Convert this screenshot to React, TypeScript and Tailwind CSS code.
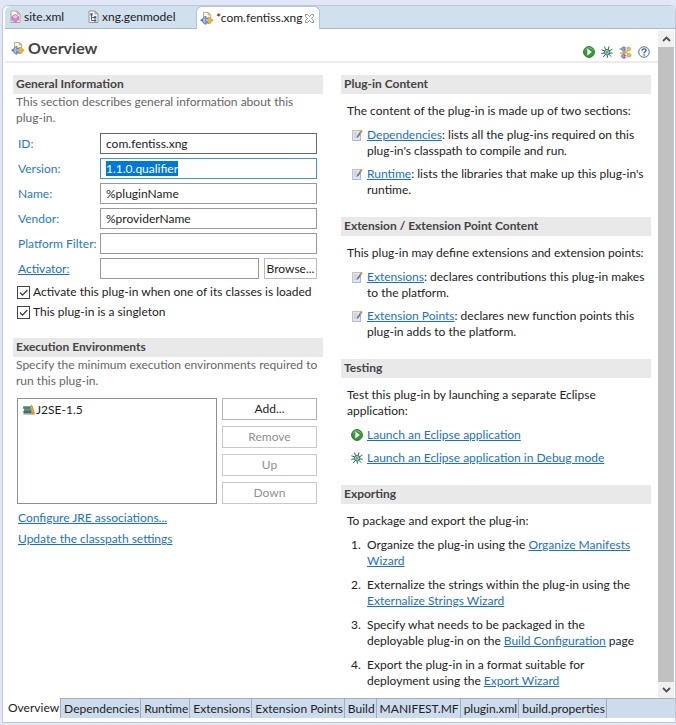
import { useEffect, useRef } from "react";
import type { ReactNode } from "react";

function PluginIcon() {
  return (
    <svg width="14" height="15" viewBox="0 0 14 15" className="shrink-0" aria-hidden="true">
      <path d="M3.500 1.500h4.800l2.400 2.400v8.100h-7.200z" fill="#fdf8ea" stroke="#c4af78" strokeWidth="1" />
      <path d="M8.200 1.500v2.500h2.500z" fill="#e8d7a4" stroke="#b9a268" strokeWidth=".7" />
      <path d="M7.800 6.400h1.600c1.400.4 2 1.200 2 2.900s-.6 2.700-2 3.100H7.800z" fill="#f0bd3a" stroke="#b98a25" strokeWidth=".7" />
      <path d="M11.400 8.400h1.800v1.800h-1.800z" fill="#e0a01c" />
      <path d="M6 5.500C3.800 5.700 2.500 7 2.500 9.200s1.300 3.800 3.500 4z" fill="#9fc0ee" stroke="#4670b4" strokeWidth=".9" />
      <path d="M.6 8.300h2v1.900h-2z" fill="#4670b4" />
      <path d="M6.200 6.900h1.600v1.200H6.200zM6.200 10.500h1.600v1.200H6.200z" fill="#4670b4" />
    </svg>
  );
}

function SiteIcon() {
  return (
    <svg width="11" height="14" viewBox="0 0 11 14" className="shrink-0" aria-hidden="true">
      <path d="M1 1h6l3 3v8.500H1z" fill="#fdf8f4" stroke="#b5a684" />
      <path d="M7 1v3h3z" fill="#e4d6b0" stroke="#a99a7c" strokeWidth=".7" />
      <path d="M5.200 4.500l3.300 2v3.600l-3.300 2-3.300-2V6.500z" fill="#d98bd5" stroke="#b05cb0" strokeWidth=".7" />
      <path d="M5.200 4.900l2.600 1.700-2.600 1.600-2.600-1.600z" fill="#f2c4ee" />
    </svg>
  );
}

function GenmodelIcon() {
  return (
    <svg width="11" height="14" viewBox="0 0 11 14" className="shrink-0" aria-hidden="true">
      <path d="M1 1h6l3 3v8.500H1z" fill="#f4f7fd" stroke="#a0977c" />
      <path d="M7 1v3h3z" fill="#e0d3ac" stroke="#8b8a80" strokeWidth=".7" />
      <path d="M3.500 5v5.500H6M3.500 7.500H6" fill="none" stroke="#3a56a0" strokeWidth=".9" />
      <path d="M2.400 3.200h2.200v2.200H2.400zM6 6.300h2.300v2.200H6zM6 9.400h2.300v2.200H6z" fill="#34539c" />
    </svg>
  );
}

function RunIcon() {
  return (
    <svg width="12" height="12" viewBox="0 0 12 12" className="shrink-0" aria-hidden="true">
      <circle cx="6" cy="6" r="5.400" fill="#36993b" stroke="#24752b" />
      <path d="M2 4.500a4.300 4.300 0 0 1 8 0" fill="none" stroke="#7cc57b" strokeWidth="1" />
      <path d="M4.300 2.600L8.800 6 4.300 9.400z" fill="#fff" />
    </svg>
  );
}

function BugIcon() {
  return (
    <svg width="12" height="12" viewBox="0 0 12 12" className="shrink-0" aria-hidden="true">
      <path
        d="M3.500 .6l1 3M8 .4l-.8 3M.4 3.800l3 1M11.400 3.200l-2.800 1.500M.3 7.500l3-.6M11.700 7.200L8.800 7M2.200 11l1.900-2.300M6.300 11.800V9.300M10.200 10.600L8.200 8.500"
        stroke="#2f6460"
        strokeWidth="1"
        fill="none"
      />
      <ellipse cx="6.100" cy="6.200" rx="2.800" ry="2.900" fill="#a5cfae" stroke="#2f6b60" strokeWidth=".9" />
      <path d="M4.300 4.300l3.700 3.800M7.800 4.200L4.500 8" stroke="#417f70" strokeWidth=".6" />
    </svg>
  );
}

function ExportPluginIcon() {
  return (
    <svg width="13" height="13" viewBox="0 0 13 13" className="shrink-0" aria-hidden="true">
      <path d="M5.500 .8v4.400c-2.200 0-3-1-3-2.200s.8-2.200 3-2.200z" fill="#86a9e2" stroke="#5379bd" strokeWidth=".7" />
      <path d="M.3 3h2.200M5.500 2h2M5.500 4h2" stroke="#5379bd" />
      <path d="M8.500 1.200h1.600c1.200 0 1.600.8 1.600 1.800s-.4 1.800-1.600 1.800H8.500z" fill="#f2c244" stroke="#c18c1d" strokeWidth=".6" />
      <path d="M1 7.200h6.500M3.500 5.900h5" stroke="#e1a22c" strokeWidth="1.300" />
      <path d="M5.500 8v4.400c-2.200 0-3-1-3-2.200s.8-2.200 3-2.200z" fill="#b78bd6" stroke="#845ab0" strokeWidth=".7" />
      <path d="M5.500 9.300h2M5.500 11.200h2" stroke="#845ab0" />
      <path d="M8.500 7.600h1.800c1.200 0 1.700.7 1.700 1.600s-.5 1.700-1.700 1.700H8.500z" fill="#f2c244" stroke="#c18c1d" strokeWidth=".6" />
    </svg>
  );
}

function HelpIcon() {
  return (
    <svg width="12" height="12" viewBox="0 0 12 12" className="shrink-0" aria-hidden="true">
      <circle cx="6" cy="6" r="5.300" fill="#f4f7fb" stroke="#5a7394" strokeWidth="1" />
      <path d="M4 4.700c0-1.200.8-1.900 2-1.900s2 .7 2 1.700c0 1.300-1.900 1.300-1.900 2.700" fill="none" stroke="#40608a" strokeWidth="1.300" />
      <circle cx="6.100" cy="8.900" r=".8" fill="#40608a" />
    </svg>
  );
}

function EditIcon() {
  return (
    <svg width="12" height="13" viewBox="0 0 12 13" className="shrink-0" aria-hidden="true">
      <path d="M1.500 1.500h8v10h-8z" fill="#dde6f5" stroke="#c9c3a4" />
      <path d="M1.500 11.500h8V6" fill="none" stroke="#aab9d3" />
      <path d="M3 4h3M3 6h2.500M3 8h2.500" stroke="#b0c4e6" />
      <path d="M5.500 9l.5-2L8.600 3.400l1.400 1L7.400 8z" fill="#6b7484" />
      <path d="M8.300 3.600L10 .8l1.700 1.200-1.900 2.700z" fill="#cf8a48" />
    </svg>
  );
}

function LibraryIcon() {
  return (
    <svg width="12" height="12" viewBox="0 0 12 12" className="shrink-0" aria-hidden="true">
      <path d="M.5 2.700h6.500v1.900H.5z" fill="#3e8f8c" stroke="#28635f" strokeWidth=".6" />
      <path d="M1.500 4.900h6v1.800H1.500z" fill="#52b56d" stroke="#2f7a50" strokeWidth=".6" />
      <path d="M.8 7h7.400v2H.8z" fill="#3a78b8" stroke="#265684" strokeWidth=".6" />
      <path d="M7.300 2.300L8.900 1.300l2.500 7.700-2.400.5z" fill="#f0a63a" stroke="#b9711b" strokeWidth=".6" />
      <path d="M.3 9.300h11.400v1.200H.3z" fill="#c47b2b" />
    </svg>
  );
}

function CloseIcon() {
  return (
    <svg width="9" height="9" viewBox="0 0 9 9" aria-hidden="true">
      <path
        d="M.5 .5h2l2 2 2-2h2v2l-2 2 2 2v2h-2l-2-2-2 2h-2v-2l2-2-2-2z"
        fill="#fff"
        stroke="#777"
        strokeWidth=".8"
      />
    </svg>
  );
}

function Chevron({ down = false }: { down?: boolean }) {
  return (
    <svg width="9" height="6" viewBox="0 0 9 6" aria-hidden="true">
      <path d={down ? "M1 1l3.500 3.500L8 1" : "M1 5l3.500-3.500L8 5"} fill="none" stroke="#505050" strokeWidth="1.800" />
    </svg>
  );
}

function Link({ children }: { children: ReactNode }) {
  return (
    <a href="#" className="text-[#1a70cf] underline">
      {children}
    </a>
  );
}

function SectionTitle({ children }: { children: ReactNode }) {
  return <h2 className="h-[19px] bg-[#e9e9e9] pl-[3px] text-xs/[18px] font-bold text-[#444]">{children}</h2>;
}

const inputClass =
  "h-[21px] w-full min-w-0 border bg-white px-[5px] outline-none selection:bg-[#0078d7] selection:text-white";

function Field({ id, label, value, selected = false, dark = false }: {
  id: string;
  label: string;
  value: string;
  selected?: boolean;
  dark?: boolean;
}) {
  const ref = useRef<HTMLInputElement>(null);
  useEffect(() => {
    if (selected) {
      ref.current?.focus();
      ref.current?.select();
    }
  }, [selected]);
  return (
    <>
      <label htmlFor={id} className="whitespace-nowrap text-[#1f78cf]">{label}</label>
      <input
        ref={ref}
        id={id}
        defaultValue={value}
        className={`${inputClass} ${selected ? "border-[#3c94e0]" : dark ? "border-[#666]" : "border-[#999]"}`}
      />
    </>
  );
}

function Check({ children }: { children: ReactNode }) {
  return (
    <label className="flex h-5 items-center gap-[3px] whitespace-nowrap">
      <span className="grid size-[13px] shrink-0">
        <input
          type="checkbox"
          defaultChecked
          className="peer col-start-1 row-start-1 size-[13px] appearance-none border border-[#444] bg-white"
        />
        <svg viewBox="0 0 13 13" className="pointer-events-none col-start-1 row-start-1 hidden size-[13px] peer-checked:block" aria-hidden="true">
          <path d="M3 6.500l2.500 2.600L10.300 4" fill="none" stroke="#333" strokeWidth="1.200" />
        </svg>
      </span>
      {children}
    </label>
  );
}

function Item({ icon, children }: { icon: ReactNode; children: ReactNode }) {
  return (
    <li className="flex">
      <span className="flex h-4 w-5 shrink-0 items-center pl-1">{icon}</span>
      <span className="whitespace-nowrap">{children}</span>
    </li>
  );
}

function InfoSection({ title, intro, children }: { title: string; intro: ReactNode; children: ReactNode }) {
  return (
    <section>
      <SectionTitle>{title}</SectionTitle>
      <p className="mt-[9px] mb-2 pl-[6px] whitespace-nowrap">{intro}</p>
      {children}
    </section>
  );
}

const pages = [
  "Overview",
  "Dependencies",
  "Runtime",
  "Extensions",
  "Extension Points",
  "Build",
  "MANIFEST.MF",
  "plugin.xml",
  "build.properties",
];

export default function App() {
  return (
    <div className="flex min-h-screen flex-col bg-[#e1e7f6] pt-[5px] pb-[2px] pl-[2px] font-['Lato','Open_Sans',sans-serif] text-xs/4 text-[#222]">
      <div className="flex flex-1 flex-col rounded-t-md border border-[#bfc6d6] bg-white pb-1 pl-[2px]">
        <div role="tablist" aria-label="Editors" className="flex h-[23px] items-stretch rounded-t-md border-b border-[#a8b9d8] bg-[#d0e0ef]">
          <button role="tab" className="flex w-[79px] items-center gap-[3px] pl-[5px]">
            <SiteIcon />
            site.xml
          </button>
          <button role="tab" className="flex w-[112px] items-center gap-[3px] pl-1">
            <GenmodelIcon />
            xng.genmodel
          </button>
          <div className="-mb-px flex items-center gap-[3px] rounded-t-md border-x border-t border-[#b5c3db] bg-white pr-[5px] pl-[3px]">
            <button role="tab" aria-selected="true" className="flex items-center gap-[2px] whitespace-nowrap">
              <PluginIcon />
              *com.fentiss.xng
            </button>
            <button aria-label="Close editor">
              <CloseIcon />
            </button>
          </div>
        </div>

        <div className="flex flex-1">
          <main className="min-w-0 flex-1">
            <header className="flex h-[34px] items-center justify-between border-b-2 border-[#ececec] pr-2 pl-[6px]">
              <h1 className="flex items-center gap-[3px] pt-[6px] text-base/5 font-bold text-[#444]">
                <PluginIcon />
                Overview
              </h1>
              <div className="flex items-center gap-[6px] pt-[14px]">
                <button aria-label="Launch"><RunIcon /></button>
                <button aria-label="Debug"><BugIcon /></button>
                <button aria-label="Export"><ExportPluginIcon /></button>
                <button aria-label="Help"><HelpIcon /></button>
              </div>
            </header>

            <div className="grid grid-cols-2 gap-[18px] pt-3 pr-[7px] pl-2">
              <div>
                <SectionTitle>General Information</SectionTitle>
                <p className="h-[39px] pl-[3px] whitespace-nowrap text-[#666]">
                  This section describes general information about this
                  <br />
                  plug-in.
                </p>
                <div className="grid grid-cols-[82px_1fr] items-center gap-y-1 pr-[6px] pl-[5px]">
                  <Field id="id" label="ID:" value="com.fentiss.xng" dark />
                  <Field id="version" label="Version:" value="1.1.0.qualifier" selected />
                  <Field id="name" label="Name:" value="%pluginName" />
                  <Field id="vendor" label="Vendor:" value="%providerName" />
                  <Field id="filter" label="Platform Filter:" value="" />
                  <Link>Activator:</Link>
                  <div className="flex gap-[5px]">
                    <input aria-label="Activator" className={`${inputClass} flex-1 border-[#999]`} />
                    <button className="w-[53px] border border-[#bbb]">Browse...</button>
                  </div>
                </div>
                <div className="mt-[3px] mb-4 pl-1">
                  <Check>Activate this plug-in when one of its classes is loaded</Check>
                  <Check>This plug-in is a singleton</Check>
                </div>

                <SectionTitle>Execution Environments</SectionTitle>
                <p className="h-[41px] pl-[3px] whitespace-nowrap text-[#666]">
                  Specify the minimum execution environments required to
                  <br />
                  run this plug-in.
                </p>
                <div className="flex gap-[5px] pr-[6px] pl-1">
                  <ul role="listbox" aria-label="Execution environments" className="min-w-0 flex-1 border border-[#8c8f96] pt-[3px] pl-[5px]">
                    <li role="option" aria-selected="false" className="flex items-center gap-[1px]">
                      <LibraryIcon />
                      J2SE-1.5
                    </li>
                  </ul>
                  <div className="flex w-[95px] flex-col gap-[6px]">
                    <button className="h-[22px] border border-[#b4b4b4]">Add...</button>
                    <button disabled className="h-[22px] border border-[#c8c8c8] text-[#8f8f8f]">Remove</button>
                    <button disabled className="h-[22px] border border-[#c8c8c8] text-[#8f8f8f]">Up</button>
                    <button disabled className="h-[22px] border border-[#c8c8c8] text-[#8f8f8f]">Down</button>
                  </div>
                </div>
                <div className="mt-[6px] flex flex-col items-start gap-[5px] pl-[5px]">
                  <Link>Configure JRE associations...</Link>
                  <Link>Update the classpath settings</Link>
                </div>
              </div>

              <div className="flex flex-col gap-[19px]">
                <InfoSection title="Plug-in Content" intro="The content of the plug-in is made up of two sections:">
                  <ul className="flex flex-col gap-[7px] pl-[6px]">
                    <Item icon={<EditIcon />}>
                      <Link>Dependencies</Link>: lists all the plug-ins required on this
                      <br />
                      plug-in's classpath to compile and run.
                    </Item>
                    <Item icon={<EditIcon />}>
                      <Link>Runtime</Link>: lists the libraries that make up this plug-in's
                      <br />
                      runtime.
                    </Item>
                  </ul>
                </InfoSection>
                <InfoSection
                  title="Extension / Extension Point Content"
                  intro="This plug-in may define extensions and extension points:"
                >
                  <ul className="flex flex-col gap-[7px] pl-[6px]">
                    <Item icon={<EditIcon />}>
                      <Link>Extensions</Link>: declares contributions this plug-in makes
                      <br />
                      to the platform.
                    </Item>
                    <Item icon={<EditIcon />}>
                      <Link>Extension Points</Link>: declares new function points this
                      <br />
                      plug-in adds to the platform.
                    </Item>
                  </ul>
                </InfoSection>
                <InfoSection
                  title="Testing"
                  intro={<>Test this plug-in by launching a separate Eclipse<br />application:</>}
                >
                  <ul className="flex flex-col gap-[7px] pl-[6px]">
                    <Item icon={<RunIcon />}><Link>Launch an Eclipse application</Link></Item>
                    <Item icon={<BugIcon />}><Link>Launch an Eclipse application in Debug mode</Link></Item>
                  </ul>
                </InfoSection>
                <InfoSection title="Exporting" intro="To package and export the plug-in:">
                  <ol className="flex flex-col gap-2 pl-[6px]">
                    <Item icon="1.">
                      Organize the plug-in using the <Link>Organize Manifests<br />Wizard</Link>
                    </Item>
                    <Item icon="2.">
                      Externalize the strings within the plug-in using the
                      <br />
                      <Link>Externalize Strings Wizard</Link>
                    </Item>
                    <Item icon="3.">
                      Specify what needs to be packaged in the
                      <br />
                      deployable plug-in on the <Link>Build Configuration</Link> page
                    </Item>
                    <Item icon="4.">
                      Export the plug-in in a format suitable for
                      <br />
                      deployment using the <Link>Export Wizard</Link>
                    </Item>
                  </ol>
                </InfoSection>
              </div>
            </div>
          </main>
          <div className="mt-[2px] mr-px flex w-4 flex-col bg-[#f0f0f0]">
            <button aria-label="Scroll up" className="flex h-4 items-center justify-center"><Chevron /></button>
            <div className="flex-1 bg-[#c1c1c1]" />
            <button aria-label="Scroll down" className="flex h-4 items-center justify-center"><Chevron down /></button>
          </div>
        </div>

        <div role="tablist" aria-label="Pages" className="flex h-5 bg-[#cddced]">
          {pages.map((page, i) => (
            <button
              key={page}
              role="tab"
              aria-selected={i === 0}
              className={`border-r border-[#a3adbb] pr-px pl-[3px] whitespace-nowrap ${i === 0 ? "bg-white" : "border-t"}`}
            >
              {page}
            </button>
          ))}
          <div className="flex-1 border-t border-[#a3adbb]" />
        </div>
      </div>
    </div>
  );
}
